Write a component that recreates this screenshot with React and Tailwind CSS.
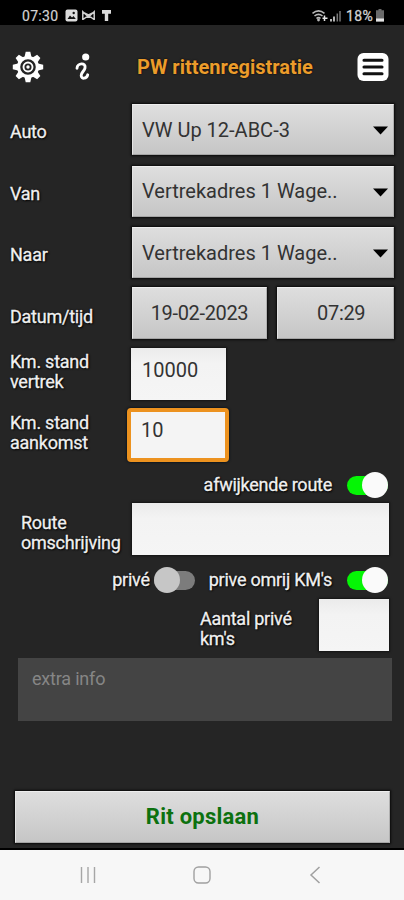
const selects = [
  { label: 'Auto', value: 'VW Up 12-ABC-3' },
  { label: 'Van', value: 'Vertrekadres 1 Wage..' },
  { label: 'Naar', value: 'Vertrekadres 1 Wage..' },
]

const outline = '[text-shadow:0_0_2px_#000,1px_1px_2px_#000] [-webkit-text-stroke:0.3px_#f0f0f0]'
const labelClass = `whitespace-nowrap text-[18px] leading-[20px] tracking-[-0.25px] text-[#f0f0f0] ${outline}`
const buttonClass = 'bg-linear-to-b from-[#dedede] to-[#c6c6c6] border border-t-[#eeeeee] border-l-[#e4e4e4] border-r-[#b0b0b0] border-b-[#a4a4a4] shadow-[0_0_2px_1px_#0a0a0a]'
const inputClass = 'bg-linear-to-b from-[#ebebeb] via-[#f3f3f3] via-30% to-[#f5f5f5] shadow-[0_0_2px_1px_#141414]'

function StatusBar() {
  return (
    <div className="flex h-[25px] items-center bg-black pl-[22px] pr-[20px] pt-[6px] text-[#d2d2d2]">
      <span className="w-[38px] text-[14px] leading-none tracking-[0.3px] [-webkit-text-stroke:0.2px_#d2d2d2]">07:30</span>
      <svg className="ml-[5px]" width="46" height="13" viewBox="0 0 46 13">
        <rect x="0.5" y="0.5" width="12" height="12" rx="2" fill="#dcdcdc" />
        <path d="M2.5 10 L5 6.5 L7 8.5 L8.5 7 L10.8 10 Z" fill="#111" />
        <circle cx="8.7" cy="4" r="1.2" fill="#111" />
        <path d="M17.8 11V2.8L23.5 8L29.2 2.8V11M17.8 3.2L23.5 6L29.2 3.2M18 10.5L23.5 6.5L29 10.5" fill="none" stroke="#cfcfcf" strokeWidth="1.5" />
        <path d="M37 1H46V4.8H43.2V12H39.8V4.8H37Z" fill="#dcdcdc" />
      </svg>
      <svg className="ml-auto" width="32" height="14" viewBox="0 0 32 14">
        <path d="M1.5 4.3Q7.5-.5 13.5 4.3M3.5 7Q7.5 3.6 11.5 7M5.5 9.5Q7.5 7.6 9.5 9.5" fill="none" stroke="#b8b8b8" strokeWidth="1.6" />
        <circle cx="7.5" cy="11" r="1.4" fill="#b8b8b8" />
        <path d="M13.5 6.5V12M11.5 9.2H16.5" stroke="#e5e5e5" strokeWidth="1.5" />
        <path d="M20 10V12.5M23 7.5V12.5" stroke="#c8c8c8" strokeWidth="1.8" />
        <path d="M26.3 4.5V12.5M29 2V12.5" stroke="#777" strokeWidth="1.5" />
      </svg>
      <span className="ml-[3px] w-[28px] text-[14px] leading-none tracking-[0.4px] [-webkit-text-stroke:0.3px_#d2d2d2]">18%</span>
      <svg className="ml-[2px]" width="8" height="13" viewBox="0 0 8 13">
        <path d="M2.5 0H5.5V1.2H8V12.5H0V1.2H2.5Z" fill="#6a6a6a" />
        <rect x="0" y="9.5" width="8" height="3" fill="#e5e5e5" />
      </svg>
    </div>
  )
}

function GearIcon() {
  return (
    <svg width="32" height="32" viewBox="-16 -16 32 32">
      {[0, 45, 90, 135, 180, 225, 270, 315].map((angle) => (
        <path key={angle} d="M-3.7 -9L-2.3 -15.2H2.3L3.7 -9Z" fill="#fff" transform={`rotate(${angle})`} />
      ))}
      <circle r="9.4" fill="none" stroke="#fff" strokeWidth="3.2" />
      <circle r="4.5" fill="none" stroke="#fff" strokeWidth="1.9" />
      <circle r="1.7" fill="#fff" />
    </svg>
  )
}

function InfoIcon() {
  return (
    <svg width="16" height="28" viewBox="0 0 16 28">
      <circle cx="10.7" cy="4" r="3.6" fill="#fff" />
      <path d="M2 15.2C2.2 9.8 11.2 9.2 10 15C9.4 18 6.2 19.5 6.2 22.4C6.2 26.3 11.8 26.1 12.7 21.8" fill="none" stroke="#fff" strokeWidth="2.9" strokeLinecap="round" />
    </svg>
  )
}

function MenuIcon() {
  return (
    <svg width="32" height="30" viewBox="0 0 32 30">
      <rect x="0.5" y="1" width="31" height="28" rx="6" fill="#fff" />
      <path d="M7 8.2H25M7 15H25M7 21.8H25" stroke="#111" strokeWidth="3.1" strokeLinecap="round" />
    </svg>
  )
}

function Toggle({ on }) {
  return (
    <div className={`flex h-[26px] w-[42px] shrink-0 items-center ${on ? 'justify-end' : ''}`}>
      <div className={`flex h-[19px] w-[41px] items-center rounded-full ${on ? 'justify-end bg-[#05f505]' : 'bg-[#7c7c7c]'}`}>
        <div className={`size-[26px] shrink-0 rounded-full ${on ? 'bg-[#fafafa]' : 'bg-[#c6c6c6]'}`} />
      </div>
    </div>
  )
}

function App() {
  return (
    <div className="flex h-[900px] w-[404px] flex-col overflow-hidden bg-[#252525] font-['Roboto',sans-serif]">
      <StatusBar />

      <header className="flex h-[79px] items-center pl-[12px] pr-[15px] pt-[5px]">
        <GearIcon />
        <div className="ml-[31px]">
          <InfoIcon />
        </div>
        <h1 className="ml-[46px] whitespace-nowrap text-[20px] font-bold leading-none text-[#eb9c2b] [text-shadow:0_0_2px_#000]">PW rittenregistratie</h1>
        <div className="ml-auto">
          <MenuIcon />
        </div>
      </header>

      <main className="flex flex-col">
        <div className="flex flex-col gap-[10.5px]">
          {selects.map((item) => (
            <div key={item.label} className="flex h-[51px] items-center pl-[10px] pr-[10px]">
              <span className={`w-[122px] pt-[5px] ${labelClass}`}>{item.label}</span>
              <div className={`flex h-full flex-1 items-center justify-between pl-[9px] pr-[5px] text-[20px] text-[#333] ${buttonClass}`}>
                <span className="whitespace-nowrap">{item.value}</span>
                <svg className="mt-[2px]" width="15" height="9" viewBox="0 0 15 9">
                  <path d="M0 0.5H15L7.5 8.5Z" fill="#000" />
                </svg>
              </div>
            </div>
          ))}
        </div>

        <div className="mt-[9px] flex h-[52px] items-center pl-[10px] pr-[10px]">
          <span className={`w-[122px] pt-[7px] ${labelClass}`}>Datum/tijd</span>
          <div className={`flex h-full w-[136px] items-center justify-center text-[20px] tracking-[-0.35px] text-[#333] ${buttonClass}`}>19-02-2023</div>
          <div className={`ml-[10px] flex h-full w-[117px] items-center justify-center pl-[11px] text-[20px] tracking-[-0.35px] text-[#333] ${buttonClass}`}>07:29</div>
        </div>

        <div className="mt-[9px] flex h-[52px] items-center pl-[10px]">
          <span className={`w-[121px] pb-[5px] ${labelClass}`}>Km. stand<br />vertrek</span>
          <div className={`h-full w-[95px] pl-[11px] pt-[7px] text-[20px] text-[#333] ${inputClass}`}>10000</div>
        </div>

        <div className="mt-[8px] flex h-[54px] items-center pl-[10px]">
          <span className={`w-[117px] pb-[5px] ${labelClass}`}>Km. stand<br />aankomst</span>
          <div className="h-full w-[102px] rounded-[4px] border-[4px] border-[#ec921f] bg-[#f4f4f4] pl-[10px] pt-[3px] text-[20px] text-[#333] shadow-[0_0_2px_1px_#101820]">10</div>
        </div>

        <div className="mt-[10px] flex h-[26px] items-center justify-end gap-[14px] pr-[16px]">
          <span className={labelClass}>afwijkende route</span>
          <Toggle on />
        </div>

        <div className="mt-[5px] flex h-[52px] items-center pl-[21px] pr-[15px]">
          <span className={`w-[111px] pt-[8px] ${labelClass}`}>Route<br />omschrijving</span>
          <div className={`h-full flex-1 ${inputClass}`} />
        </div>

        <div className="mt-[12px] flex h-[26px] items-center justify-end pr-[16px]">
          <span className={labelClass}>privé</span>
          <div className="ml-[4px]">
            <Toggle />
          </div>
          <span className={`ml-[13px] ${labelClass}`}>prive omrij KM's</span>
          <div className="ml-[14px]">
            <Toggle on />
          </div>
        </div>

        <div className="mt-[6px] flex h-[52px] items-center justify-end pr-[15px]">
          <span className={`w-[119px] pt-[7px] ${labelClass}`}>Aantal privé<br />km's</span>
          <div className={`h-full w-[70px] ${inputClass}`} />
        </div>

        <div className="ml-[18px] mr-[12px] mt-[7px] h-[63px] bg-[#444444] pl-[14px] pt-[11px] text-[18px] leading-[20px] tracking-[-0.2px] text-[#868686]">extra info</div>

        <button className={`ml-[15px] mr-[14px] mt-[70px] h-[52px] pb-px text-[22px] font-bold leading-none tracking-[0.25px] text-[#0c710f] ${buttonClass}`}>Rit opslaan</button>
      </main>

      <nav className="mt-auto flex h-[52px] items-center justify-between border-t-2 border-black bg-[#f7f7f7] pl-[80px] pr-[83px]">
        <svg width="16" height="16" viewBox="0 0 16 16">
          <path d="M1.5 0V16M8 0V16M14.5 0V16" stroke="#a6a6a6" strokeWidth="1.4" />
        </svg>
        <svg className="mr-[2px]" width="18" height="18" viewBox="0 0 18 18">
          <rect x="1" y="1" width="16" height="16" rx="4.5" fill="none" stroke="#a0a0a0" strokeWidth="1.4" />
        </svg>
        <svg width="12" height="18" viewBox="0 0 12 18">
          <path d="M10.5 1L2 9L10.5 17" fill="none" stroke="#a0a0a0" strokeWidth="1.5" />
        </svg>
      </nav>
    </div>
  )
}

export default App
